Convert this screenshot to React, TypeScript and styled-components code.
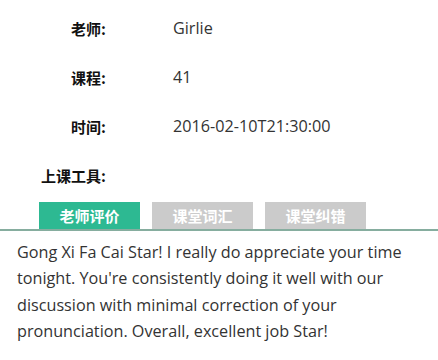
import { useState } from "react";
import styled, { createGlobalStyle } from "styled-components";

const GlobalStyle = createGlobalStyle`
  body {
    margin: 0;
    background: #ffffff;
    font-family: "Open Sans", "Noto Sans CJK SC", sans-serif;
  }
`;

const Page = styled.div`
  width: 438px;
  height: 360px;
  overflow: hidden;
  background: #fff;
`;

const Info = styled.div`
  display: grid;
  grid-template-columns: 106px 1fr;
  column-gap: 67px;
  grid-auto-rows: 49px;
  padding-top: 4px;
`;

const Label = styled.div`
  text-align: right;
  font-family: "Noto Sans CJK SC", sans-serif;
  font-weight: 700;
  font-size: 15px;
  color: #111;
  line-height: 49px;
`;

const Value = styled.div`
  font-size: 16.2px;
  color: #333;
  line-height: 49px;
`;

const Tabs = styled.div`
  display: flex;
  gap: 12px;
  padding-left: 39px;
  margin-top: 2px;
  border-bottom: 2px solid #86ad9f;
`;

const Tab = styled.button<{ $active: boolean }>`
  width: 101px;
  height: 27px;
  border: none;
  padding: 0;
  background: ${(p) => (p.$active ? "#2db992" : "#cbcbcb")};
  color: #fff;
  font-family: "Noto Sans CJK SC", sans-serif;
  font-weight: 700;
  font-size: 15px;
  cursor: pointer;
`;

const Comment = styled.p`
  margin: 0;
  padding: 8px 16px 0 17px;
  font-size: 16.2px;
  line-height: 26.3px;
  color: #333;
`;

const tabs = ["老师评价", "课堂词汇", "课堂纠错"];

export default function App() {
  const [active, setActive] = useState(0);
  return (
    <Page>
      <GlobalStyle />
      <Info>
        <Label>老师:</Label>
        <Value>Girlie</Value>
        <Label>课程:</Label>
        <Value>41</Value>
        <Label>时间:</Label>
        <Value>2016-02-10T21:30:00</Value>
        <Label>上课工具:</Label>
        <Value></Value>
      </Info>
      <Tabs>
        {tabs.map((t, i) => (
          <Tab key={t} $active={i === active} onClick={() => setActive(i)}>
            {t}
          </Tab>
        ))}
      </Tabs>
      <Comment>
        Gong Xi Fa Cai Star! I really do appreciate your time tonight. You're
        consistently doing it well with our discussion with minimal correction
        of your pronunciation. Overall, excellent job Star!
      </Comment>
    </Page>
  );
}
